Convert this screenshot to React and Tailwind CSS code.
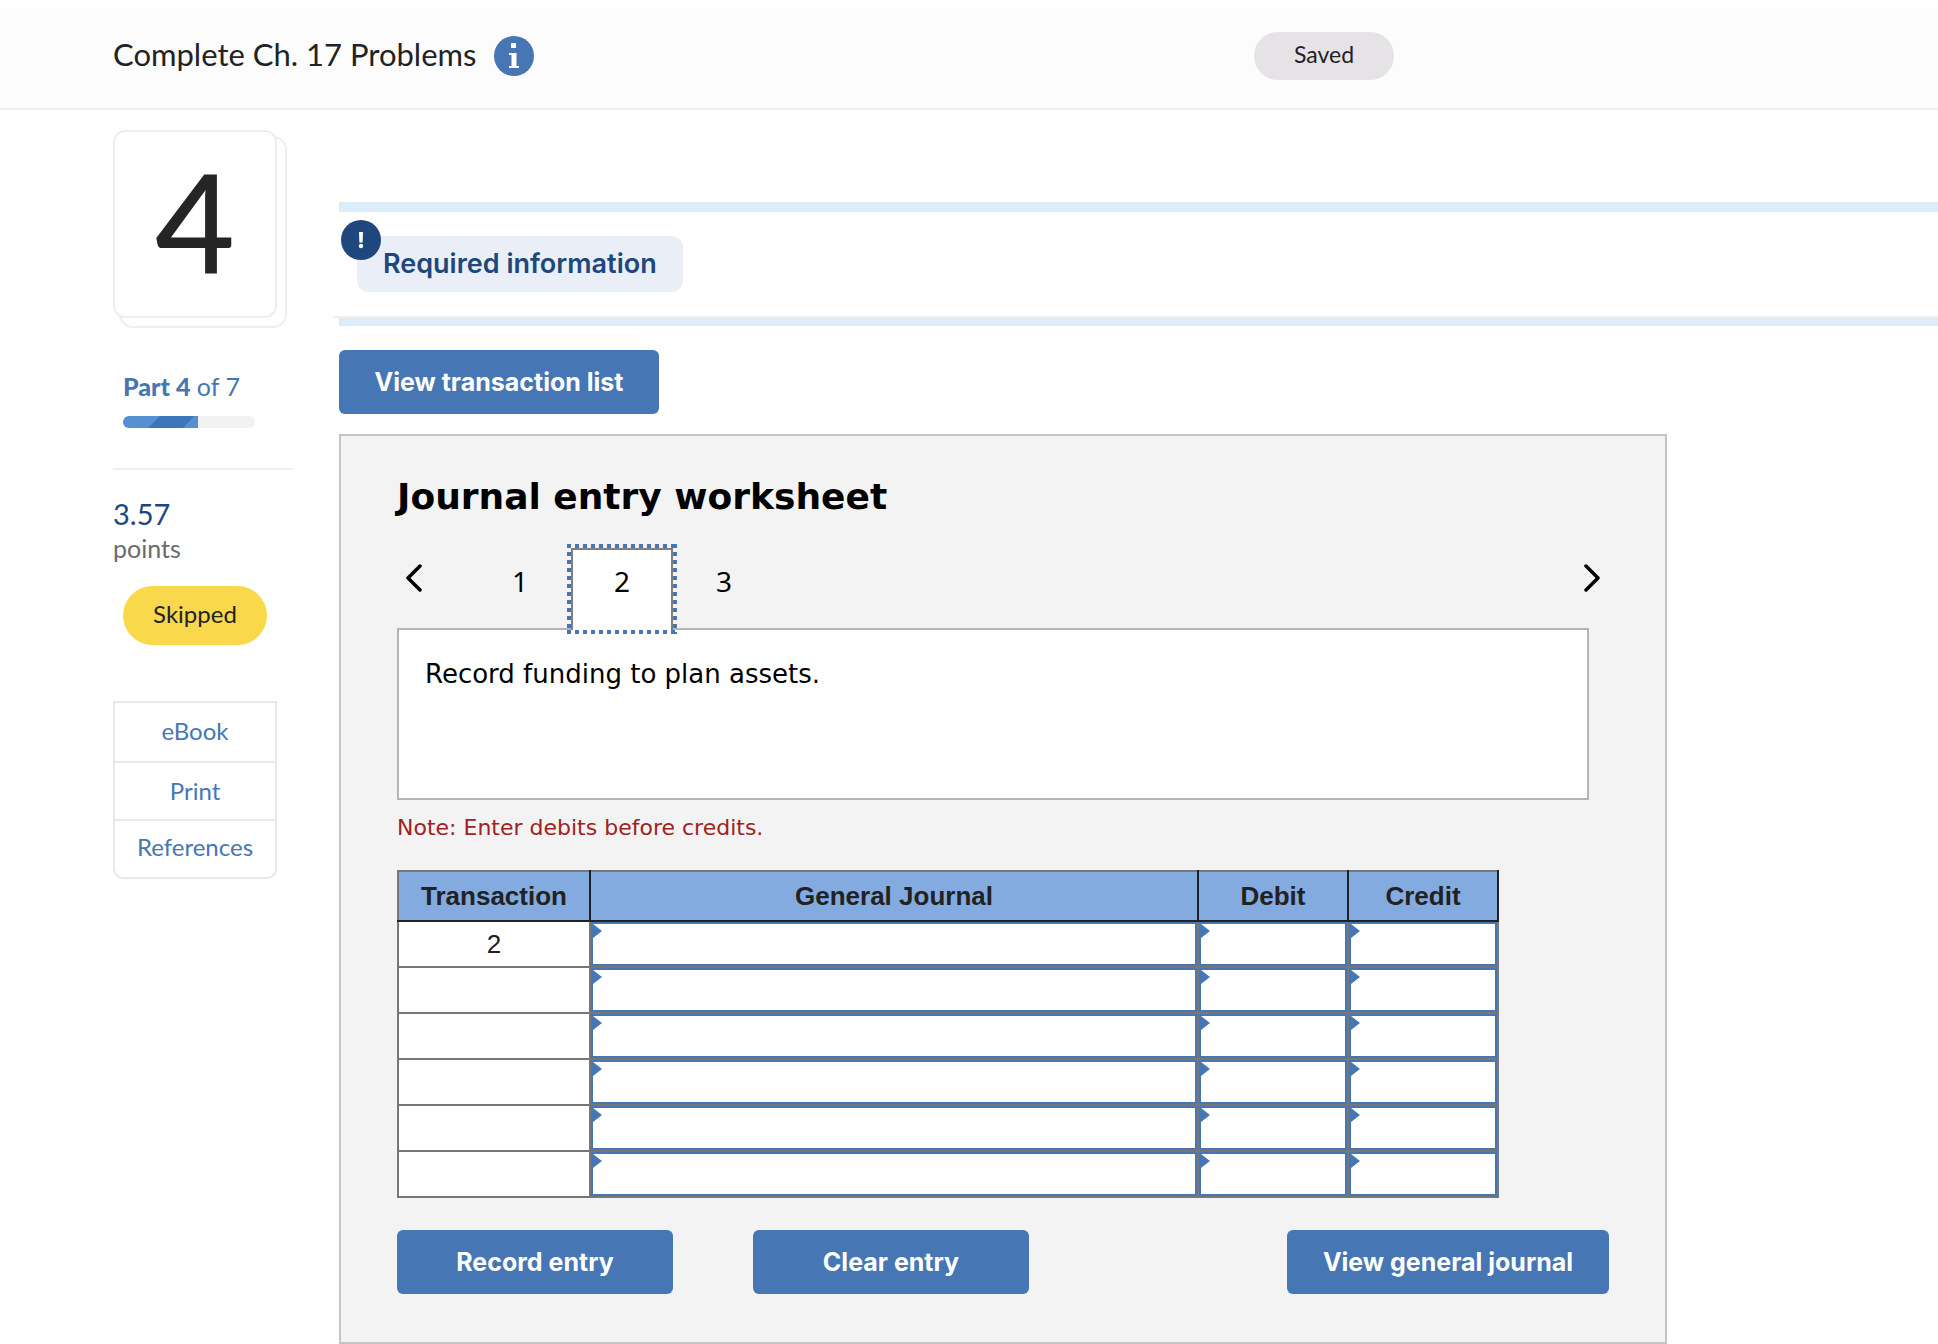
import React from "react";

const SANS = "font-['Lato','Inter',sans-serif]";
const rows = ["2", "", "", "", "", ""];
const fields = ["General Journal", "Debit", "Credit"];

function Header() {
  return (
    <header className="mt-2 flex h-[102px] items-center border-b-2 border-[#efefef] bg-[#fcfcfc] pr-[544px] pb-1 pl-[113px]">
      <h1 className="pb-1 text-[31px] leading-10 text-[#222]">Complete Ch. 17 Problems</h1>
      <button
        type="button"
        aria-label="Assignment information"
        className="ml-[18px] flex size-10 items-center justify-center rounded-full bg-[#4676b4]"
      >
        <svg width="12" height="26" viewBox="0 0 12 26" fill="#fff" aria-hidden="true">
          <path d="M3 0h5v5H3zM1 10h7.500v13H11v2H1v-2h2.500V12H1z" />
        </svg>
      </button>
      <span className="ml-auto flex h-12 w-[140px] items-center justify-center rounded-full bg-[#e5e3e6] pb-1 text-[23px] leading-7 text-[#222]">
        Saved
      </span>
    </header>
  );
}

function Sidebar() {
  return (
    <aside className="w-[180px] shrink-0 pt-5">
      <div className="relative h-[198px]">
        <div className="absolute top-[6px] left-[6px] h-[192px] w-[168px] rounded-[14px] border-2 border-[#eee]" />
        <div className="relative flex h-[188px] w-[164px] items-center justify-center rounded-xl border-2 border-[#eee] bg-white pb-2 text-[138px] leading-none font-medium text-[#252525]">
          4
        </div>
      </div>
      <div className="mt-[42px] pl-[10px] text-[25px] leading-8 text-[#4676b4]">
        <b className="font-black">Part 4</b> of 7
      </div>
      <div className="mt-[14px] ml-[10px] h-3 w-[132px] overflow-hidden rounded-full bg-[#f2f2f2]">
        <svg className="block" width="75" height="12" viewBox="0 0 75 12" aria-hidden="true">
          <path fill="#5591d0" d="M0 0h75v12H0z" />
          <path fill="#3c76b8" d="M37 0h34L60 12H25z" />
        </svg>
      </div>
      <hr className="mt-10 border-t-2 border-[#eee]" />
      <div className="mt-[26px] text-[29px] leading-9 text-[#20477d]">3.57</div>
      <div className="text-[25px] leading-8 text-[#6b6b6b]">points</div>
      <div className="mt-[22px] ml-[10px] flex h-[59px] w-36 items-center justify-center rounded-full bg-[#fad84b] pb-1 text-[24px] leading-8 text-[#222]">
        Skipped
      </div>
      <nav className="mt-14 flex w-[164px] flex-col divide-y-2 divide-[#e8e8e8] rounded-b-[10px] border-2 border-[#e8e8e8] text-center text-[24px] leading-8 text-[#4676b4]">
        <a href="#ebook" className="pt-3 pb-[14px]">eBook</a>
        <a href="#print" className="py-3">Print</a>
        <a href="#references" className="pt-[10px] pb-[14px]">References</a>
      </nav>
    </aside>
  );
}

function ActionButton({ children, className }) {
  return (
    <button
      type="button"
      className={`h-16 rounded-md bg-[#4676b4] font-['Inter',sans-serif] text-[25px] leading-8 font-bold text-white ${className}`}
    >
      {children}
    </button>
  );
}

function RequiredInfo() {
  return (
    <section>
      <div className="ml-[6px] h-[10px] bg-[#dcecf9]" />
      <div className="border-b-2 border-[#efefef] pt-6 pb-6 pl-6">
        <div className="relative w-fit">
          <h2 className="rounded-xl bg-[#eaeff7] px-[26px] py-3 font-['Inter',sans-serif] text-[27px] leading-8 font-semibold text-[#20477d]">
            Required information
          </h2>
          <span className="absolute -top-4 -left-4 flex size-10 items-center justify-center rounded-full bg-[#20477d]">
            <svg width="6" height="18" viewBox="0 0 6 18" fill="#fff" aria-hidden="true">
              <path d="M1 1h4l-.4 10.500H1.400z" />
              <circle cx="3" cy="15" r="2.200" />
            </svg>
          </span>
        </div>
      </div>
      <div className="ml-[6px] h-2 bg-[#dcecf9]" />
    </section>
  );
}

function Chevron({ left }) {
  return (
    <svg width="18" height="28" viewBox="0 0 18 28" fill="none" stroke="#000" strokeWidth="3.500" strokeLinecap="round" strokeLinejoin="round" aria-hidden="true">
      <path d={left ? "M15 2 3 14l12 12" : "M3 2l12 12L3 26"} />
    </svg>
  );
}

function Tabs() {
  return (
    <div className="flex h-[84px] items-start font-['Noto_Sans',sans-serif] text-[28px] leading-9 text-black">
      <button type="button" aria-label="Previous entry" className="mt-4 ml-2">
        <Chevron left />
      </button>
      <div role="tablist" className="ml-[46px] flex">
        <button type="button" role="tab" aria-selected="false" className="h-[82px] w-[102px] pb-4">1</button>
        <button type="button" role="tab" aria-selected="true" className="relative z-10 h-[82px] w-[102px] border-x-2 border-t-2 border-[#7f7f7f] bg-white pb-[18px]">
          2
          <svg className="absolute -top-[6px] -left-[6px]" width="110" height="90" viewBox="0 0 110 90" fill="none" stroke="#4676b4" strokeWidth="4" strokeDasharray="4 4" aria-hidden="true">
            <path d="M0 2h110M0 88h110M2 0v90M108 0v90" />
          </svg>
        </button>
        <button type="button" role="tab" aria-selected="false" className="h-[82px] w-[102px] pb-4">3</button>
      </div>
      <button type="button" aria-label="Next entry" className="mt-4 mr-2 ml-auto">
        <Chevron />
      </button>
    </div>
  );
}

function EntryTable() {
  return (
    <table className="mt-[26px] w-[1102px] max-w-full table-fixed border-collapse bg-white font-['Liberation_Sans',sans-serif] text-[26px] leading-8 text-[#222]">
      <colgroup>
        <col className="w-[192px]" />
        <col />
        <col className="w-[150px]" />
        <col className="w-[150px]" />
      </colgroup>
      <thead>
        <tr className="bg-[#83abe0]">
          {["Transaction", ...fields].map((name) => (
            <th
              key={name}
              scope="col"
              className="h-[50px] border-2 border-[#222] border-t-[#777] p-0 font-bold first:border-l-[#777]"
            >
              {name}
            </th>
          ))}
        </tr>
      </thead>
      <tbody>
        {rows.map((label, i) => (
          <tr key={i}>
            <td className="border-2 border-[#777] p-0 text-center">{label}</td>
            {fields.map((field) => (
              <td key={field} className="relative border-2 border-[#777] p-0">
                <input
                  type="text"
                  aria-label={`${field}, row ${i + 1}`}
                  className="block h-11 w-full border-2 border-[#4676b4] bg-white px-3 outline-none"
                />
                <svg className="pointer-events-none absolute top-[2px] left-[2px]" width="9" height="14" viewBox="0 0 9 14" fill="#4676b4" aria-hidden="true">
                  <path d="M0 0l9 7-9 7z" />
                </svg>
              </td>
            ))}
          </tr>
        ))}
      </tbody>
    </table>
  );
}

function Worksheet() {
  return (
    <section className="mt-5 ml-[6px] max-w-[1328px] border-2 border-[#c4c4c4] bg-[#f3f3f3] px-14 pb-12">
      <h2 className="mt-9 font-['DejaVu_Sans',sans-serif] text-[36px] leading-[50px] font-bold text-black">
        Journal entry worksheet
      </h2>
      <div className="mt-[26px]">
        <Tabs />
      </div>
      <div className="-mt-1 mr-5 h-[172px] border-2 border-[#b5b5b5] bg-white px-[26px] pt-7 font-['DejaVu_Sans',sans-serif] text-[26px] leading-8 text-black">
        Record funding to plan assets.
      </div>
      <p className="mt-3 font-['DejaVu_Sans',sans-serif] text-[22px] leading-8 text-[#9f2222]">
        Note: Enter debits before credits.
      </p>
      <EntryTable />
      <div className="mt-8 flex">
        <ActionButton className="w-[276px]">Record entry</ActionButton>
        <ActionButton className="ml-20 w-[276px]">Clear entry</ActionButton>
        <ActionButton className="ml-auto w-[322px]">View general journal</ActionButton>
      </div>
    </section>
  );
}

export default function App() {
  return (
    <div className={`flow-root bg-white ${SANS}`}>
      <Header />
      <div className="flex pl-[113px]">
        <Sidebar />
        <main className="ml-10 min-w-0 flex-1 pt-[92px]">
          <RequiredInfo />
          <ActionButton className="mt-6 ml-[6px] w-80">View transaction list</ActionButton>
          <Worksheet />
        </main>
      </div>
    </div>
  );
}
